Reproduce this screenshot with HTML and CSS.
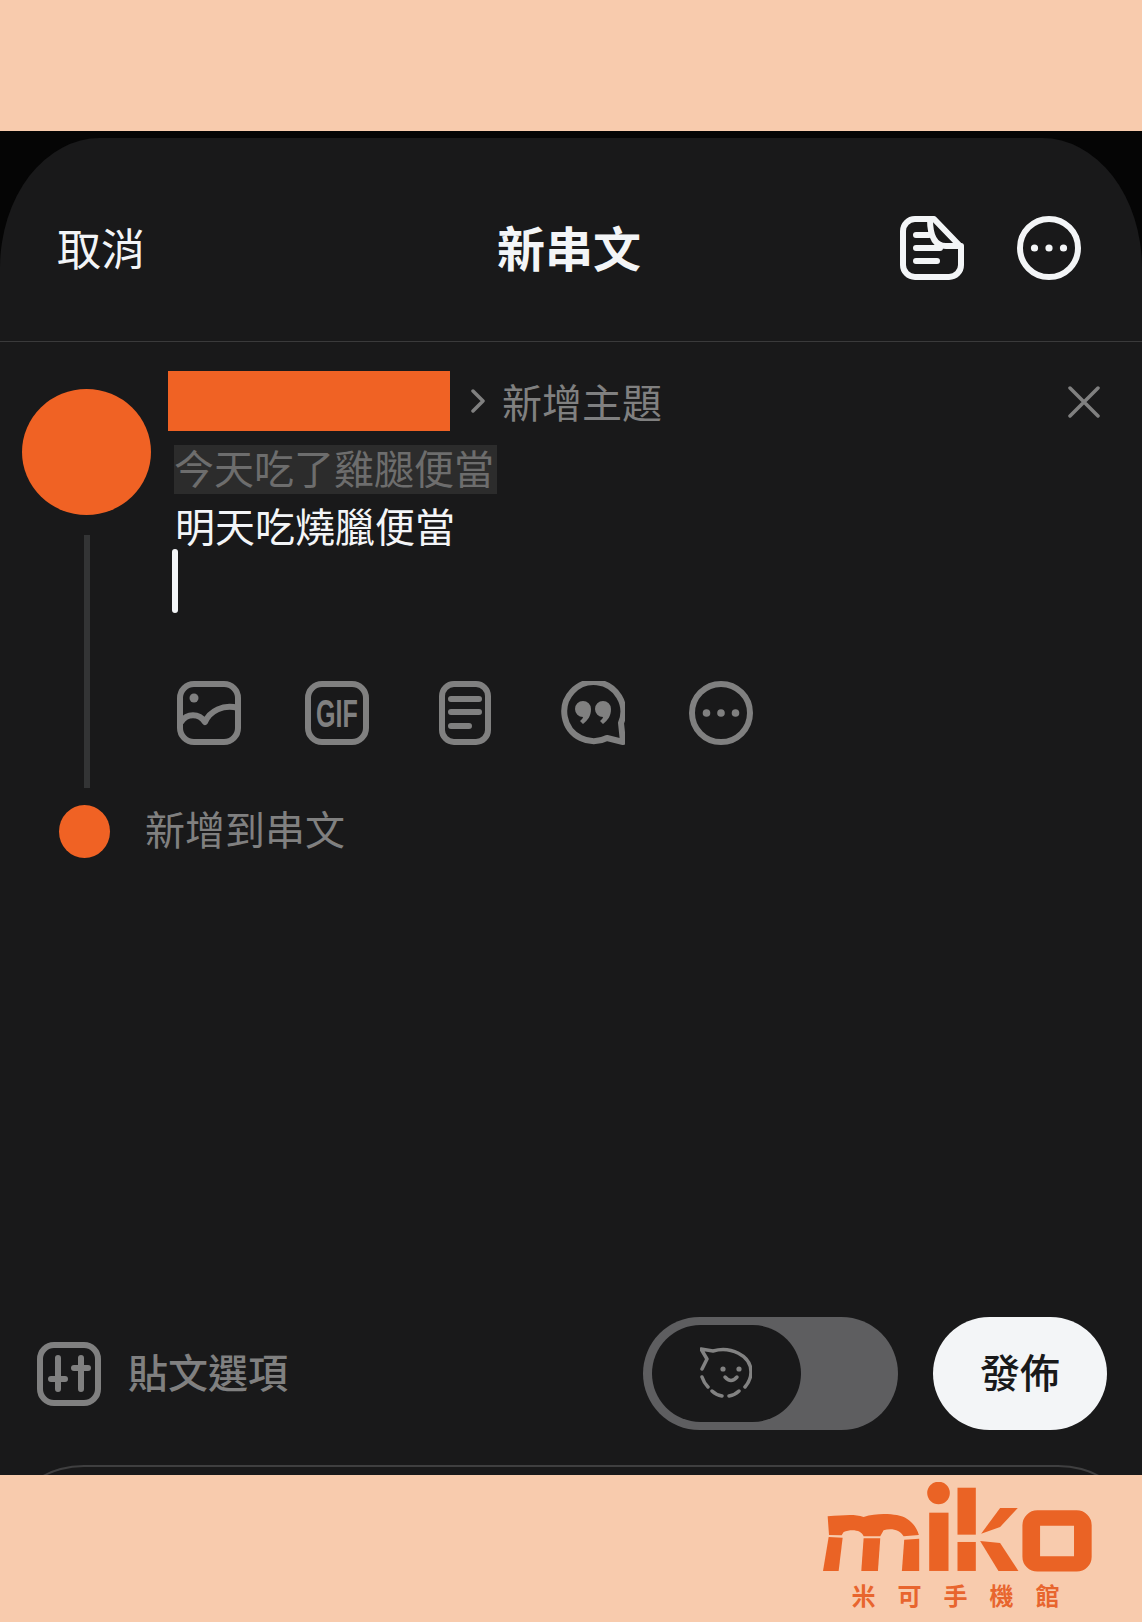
FILE: index.html
```html
<!DOCTYPE html>
<html lang="zh-Hant">
<head>
    <meta charset="utf-8">
    <title>新串文</title>
    <link rel="stylesheet" href="styles.css">
</head>
<body>
    <div class="band-top"></div>

    <main class="stage">
        <section class="sheet">
            <header class="sheet-head">
                <span class="cancel">取消</span>
                <h1 class="title">新串文</h1>
                <div class="head-icons">
                    <svg class="icon icon-white" viewBox="0 0 64 64">
                        <path d="M34 3H15A12 12 0 0 0 3 15V49A12 12 0 0 0 15 61H49A12 12 0 0 0 61 49V31Z"/>
                        <path d="M30 3C30 18 34 30 46 30H61"/>
                        <path d="M16 19H29M16 32H40M16 45H37"/>
                    </svg>
                    <svg class="icon icon-white" viewBox="0 0 64 64">
                        <circle cx="32" cy="32" r="29"/>
                        <circle class="dot" cx="17.5" cy="32" r="3.6"/>
                        <circle class="dot" cx="32" cy="32" r="3.6"/>
                        <circle class="dot" cx="46.5" cy="32" r="3.6"/>
                    </svg>
                </div>
            </header>

            <div class="post">
                <div class="rail">
                    <div class="avatar"></div>
                    <div class="rail-line"></div>
                </div>
                <div class="post-body">
                    <div class="post-top">
                        <div class="name-mask"></div>
                        <svg class="chevron" viewBox="0 0 14 24">
                            <path d="M2 2L12 12L2 22"/>
                        </svg>
                        <span class="topic">新增主題</span>
                        <svg class="close" viewBox="0 0 32 32">
                            <path d="M2 2L30 30M30 2L2 30"/>
                        </svg>
                    </div>
                    <div class="line-old">今天吃了雞腿便當</div>
                    <div class="line-new">明天吃燒臘便當</div>
                    <div class="caret"></div>
                    <div class="tools">
                        <svg class="icon icon-grey" viewBox="0 0 64 64">
                            <rect x="3" y="3" width="58" height="58" rx="14"/>
                            <circle class="dot" cx="17" cy="17" r="4.5"/>
                            <path d="M4 41C10 32 22 32 28 41C33 30 46 23 61 27"/>
                        </svg>
                        <svg class="icon icon-grey" viewBox="0 0 64 64">
                            <rect x="3" y="3" width="58" height="58" rx="14"/>
                            <text class="gif" transform="translate(32 46) scale(.66 1)">GIF</text>
                        </svg>
                        <svg class="icon icon-grey icon-narrow" viewBox="0 0 52 64">
                            <rect x="3" y="3" width="46" height="58" rx="12"/>
                            <path d="M12 18H40M12 31H40M12 45H30"/>
                        </svg>
                        <svg class="icon icon-grey" viewBox="0 0 64 64">
                            <path d="M46 57A29.5 29.5 0 1 1 60 42L62 61Z"/>
                            <path class="dot" d="M14 28a8 8 0 0 1 16 0c0 7-3 11-8 15l-3-3c2-2 3-3 3-4a8 8 0 0 1-8-8z"/>
                            <path class="dot" d="M34 28a8 8 0 0 1 16 0c0 7-3 11-8 15l-3-3c2-2 3-3 3-4a8 8 0 0 1-8-8z"/>
                        </svg>
                        <svg class="icon icon-grey" viewBox="0 0 64 64">
                            <circle cx="32" cy="32" r="29"/>
                            <circle class="dot" cx="17.5" cy="32" r="3.8"/>
                            <circle class="dot" cx="32" cy="32" r="3.8"/>
                            <circle class="dot" cx="46.5" cy="32" r="3.8"/>
                        </svg>
                    </div>
                </div>
            </div>

            <div class="add-row">
                <div class="add-dot"></div>
                <span class="add-label">新增到串文</span>
            </div>

            <footer class="sheet-foot">
                <svg class="icon icon-grey" viewBox="0 0 64 64">
                    <rect x="3" y="3" width="58" height="58" rx="14"/>
                    <path d="M21 16V47M14 37H28M44 16V47M37 26H51"/>
                </svg>
                <span class="options-label">貼文選項</span>
                <div class="toggle">
                    <div class="knob">
                        <svg class="face" viewBox="0 0 52 52">
                            <path d="M2 22L7 12L1 2L13 4C30 -1 51 8 51 25Q51 33 45 40"/>
                            <path d="M2 30Q4 36 8 40M12 44Q16 48 22 49M29 49Q35 48 39 44"/>
                            <path d="M25 30Q31 37 37 30"/>
                            <circle class="dot" cx="23" cy="22" r="2.6"/>
                            <circle class="dot" cx="39" cy="22" r="2.6"/>
                        </svg>
                    </div>
                </div>
                <button class="publish">發佈</button>
            </footer>

            <div class="next-panel"></div>
        </section>
    </main>

    <div class="band-bottom">
        <div class="brand-block">
            <svg class="logo" viewBox="68 95 808 270" role="img" aria-label="miko">
                <path d="M82 198C130 195 160 190 190 200C225 188 265 190 290 194C325 200 348 225 356 254L310 258C300 240 275 232 250 240L240 258L190 258C185 240 155 235 130 245L124 255L86 254Z"/>
                <path d="M85 260L127 262L115 362L68 362Z"/>
                <path d="M190 264L240 264L233 362L183 362Z"/>
                <path d="M312 268L357 265L357 362L305 362Z"/>
                <circle cx="415" cy="128" r="34"/>
                <rect x="387" y="187" width="58" height="175"/>
                <rect x="472" y="112" width="55" height="141"/>
                <rect x="472" y="275" width="55" height="87"/>
                <path d="M543 250L600 173L653 173L600 230Z"/>
                <path d="M540 272L600 278L655 362L595 362Z"/>
                <path fill-rule="evenodd" d="M712 180H830A45 45 0 0 1 875 225V319A45 45 0 0 1 830 364H712A45 45 0 0 1 667 319V225A45 45 0 0 1 712 180ZM720 226V318H822V226Z"/>
            </svg>
            <div class="brand">米可手機館</div>
        </div>
    </div>
</body>
</html>
```

FILE: styles.css
```css
* {
    box-sizing: border-box;
}
html, body {
    margin: 0;
    height: 1622px;
    overflow: hidden;
    background-color: #000;
}
body {
    display: flex;
    flex-direction: column;
    font-family: "Noto Sans CJK TC", "Noto Sans", sans-serif;
    color: #f3f5f7;
}
.band-top {
    height: 131px;
    background-color: #f8cbad;
}
.stage {
    flex: 1;
    display: flex;
    padding-top: 7px;
    min-height: 0;
    background-color: #050505;
}
.sheet {
    flex: 1;
    display: flex;
    flex-direction: column;
    overflow: hidden;
    background-color: #19191a;
    border-radius: 100px 100px 0 0 / 130px 130px 0 0;
}

/* header */
.sheet-head {
    flex: none;
    height: 204px;
    padding: 0 61px 0 57px;
    display: grid;
    grid-template-columns: 1fr auto 1fr;
    align-items: center;
    border-bottom: 1px solid #3a3a3b;
}
.cancel {
    font-size: 44px;
    line-height: 60px;
    margin-top: 14px;
}
.title {
    margin: 13px 0 0;
    font-size: 48px;
    line-height: 60px;
    font-weight: 700;
}
.head-icons {
    display: flex;
    justify-content: flex-end;
    gap: 53px;
    margin-top: 17px;
}

/* icons */
.icon {
    flex: none;
    display: block;
    width: 64px;
    height: 64px;
    fill: none;
    stroke-width: 6;
    stroke-linecap: round;
    stroke-linejoin: round;
}
.icon-narrow {
    width: 52px;
    margin: 0 6px;
}
.icon-white {
    stroke: #f3f5f7;
}
.icon-white .dot {
    fill: #f3f5f7;
    stroke: none;
}
.icon-grey {
    stroke: #808080;
}
.icon-grey .dot {
    fill: #808080;
    stroke: none;
}
.gif {
    font-family: "Liberation Sans", sans-serif;
    font-size: 38px;
    font-weight: 700;
    text-anchor: middle;
    fill: #808080;
    stroke: none;
}

/* post */
.post {
    flex: none;
    display: flex;
    height: 463px;
}
.rail {
    flex: none;
    width: 168px;
    padding-left: 22px;
}
.avatar {
    width: 129px;
    height: 126px;
    margin-top: 47px;
    border-radius: 50%;
    background-color: #f06224;
}
.rail-line {
    width: 6px;
    height: 253px;
    margin: 20px 0 0 62px;
    background-color: #333435;
}
.post-body {
    flex: 1;
    min-width: 0;
    padding-top: 29px;
}
.post-top {
    display: flex;
    align-items: center;
    padding-right: 42px;
}
.name-mask {
    width: 282px;
    height: 60px;
    background-color: #f06224;
}
.chevron {
    width: 14px;
    height: 24px;
    margin-left: 21px;
    fill: none;
    stroke: #808080;
    stroke-width: 3.5;
    stroke-linecap: round;
    stroke-linejoin: round;
}
.topic {
    margin-left: 17px;
    font-size: 40px;
    line-height: 56px;
    color: #808080;
}
.close {
    width: 32px;
    height: 32px;
    margin: 2px 0 0 auto;
    fill: none;
    stroke: #808080;
    stroke-width: 3.5;
    stroke-linecap: round;
}
.line-old {
    width: 323px;
    height: 49px;
    margin: 14px 0 0 6px;
    font-size: 40px;
    line-height: 45px;
    white-space: nowrap;
    color: #6d6d6d;
    background-color: #2c2c2c;
}
.line-new {
    height: 48px;
    margin: 10px 0 0 7px;
    font-size: 40px;
    line-height: 42px;
    white-space: nowrap;
}
.caret {
    width: 6px;
    height: 64px;
    margin: -3px 0 0 4px;
    border-radius: 3px;
    background-color: #f3f5f7;
}
.tools {
    display: flex;
    gap: 64px;
    margin: 68px 0 0 9px;
}

/* add to thread */
.add-row {
    flex: none;
    display: flex;
    align-items: center;
    height: 53px;
    padding-left: 59px;
}
.add-dot {
    width: 51px;
    height: 53px;
    border-radius: 50%;
    background-color: #f06224;
}
.add-label {
    margin: -6px 0 0 35px;
    font-size: 40px;
    line-height: 53px;
    color: #808080;
}

/* footer */
.sheet-foot {
    flex: none;
    display: flex;
    align-items: center;
    margin-top: auto;
    margin-bottom: 35px;
    padding: 0 35px 0 37px;
}
.options-label {
    margin: -5px 0 0 27px;
    font-size: 40px;
    font-weight: 500;
    line-height: 56px;
    color: #808080;
}
.toggle {
    width: 255px;
    height: 113px;
    margin-left: auto;
    padding: 8px 0 0 9px;
    border-radius: 57px;
    background-color: #5e5e60;
}
.knob {
    width: 149px;
    height: 97px;
    display: flex;
    align-items: center;
    justify-content: center;
    border-radius: 49px;
    background-color: #19191a;
}
.face {
    width: 52px;
    height: 52px;
    margin: -1px 2px 0 0;
    fill: none;
    stroke: #828282;
    stroke-width: 3.5;
    stroke-linecap: round;
    stroke-linejoin: round;
}
.face .dot {
    fill: #828282;
    stroke: none;
}
.publish {
    width: 174px;
    height: 113px;
    margin-left: 35px;
    padding: 0 0 5px;
    border: none;
    border-radius: 57px;
    font-family: inherit;
    font-size: 40px;
    font-weight: 500;
    color: #19191a;
    background-color: #f3f5f7;
}
.next-panel {
    flex: none;
    height: 60px;
    margin: 0 22px -50px;
    border: 2px solid #3f3f40;
    border-bottom: none;
    border-radius: 62px 62px 0 0 / 40px 40px 0 0;
}

/* brand band */
.band-bottom {
    flex: none;
    height: 147px;
    padding: 7px 0 0 823px;
    background-color: #f8cbad;
}
.brand-block {
    width: 269px;
    display: flex;
    flex-direction: column;
    align-items: center;
}
.logo {
    flex: none;
    width: 269px;
    height: 90px;
    fill: #ea6325;
}
.brand {
    margin: 8px -18px 0 0;
    font-size: 24px;
    line-height: 30px;
    font-weight: 700;
    letter-spacing: 22px;
    white-space: nowrap;
    color: #e8652e;
}
```
